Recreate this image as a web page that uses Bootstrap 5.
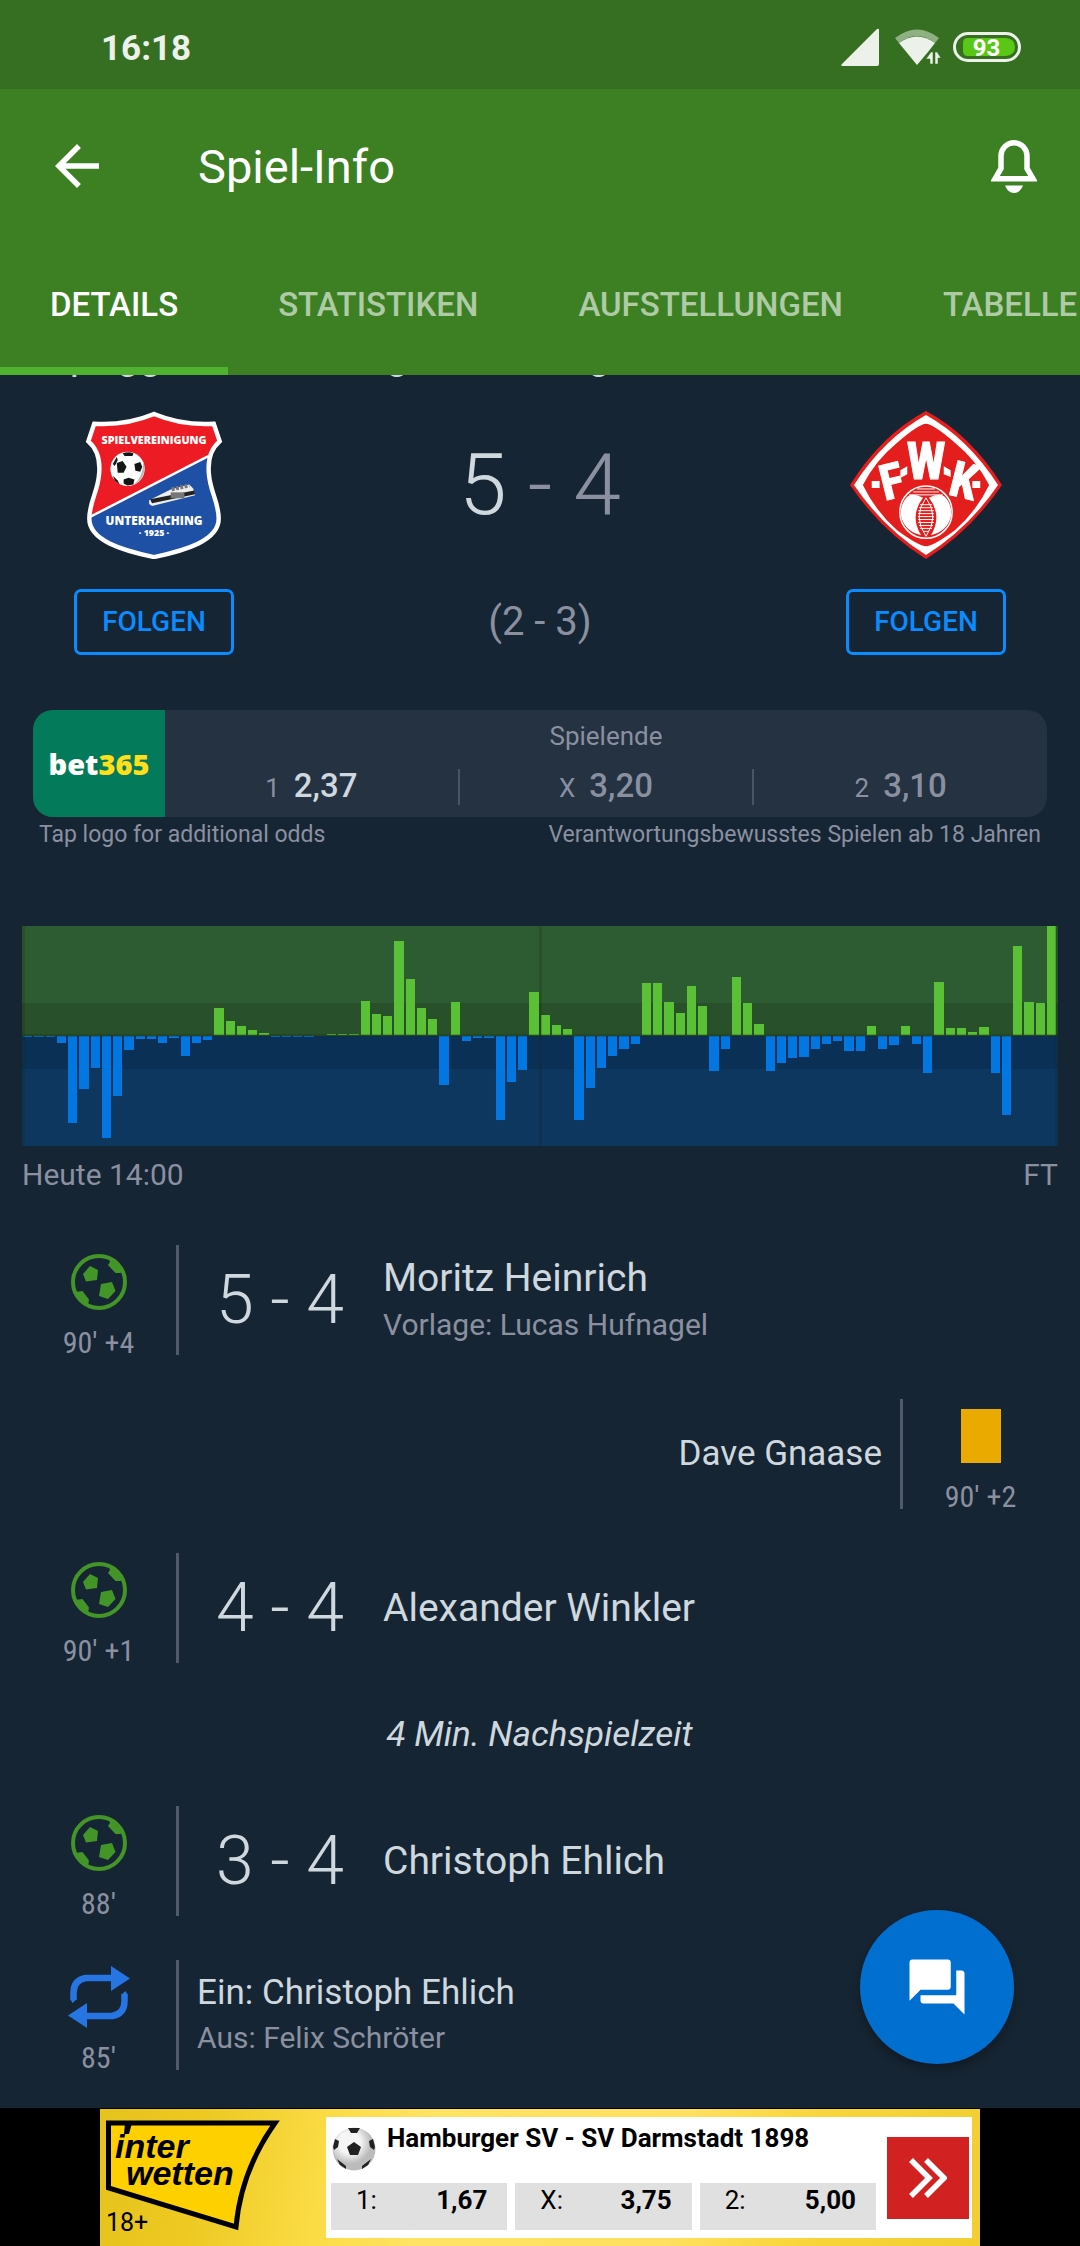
<!DOCTYPE html>
<html lang="de">
<head>
<meta charset="utf-8">
<meta name="viewport" content="width=device-width, initial-scale=1">
<title>Spiel-Info</title>
<link href="https://cdn.jsdelivr.net/npm/bootstrap@5.3.0/dist/css/bootstrap.min.css" rel="stylesheet">
<style>
body{background:#162533;color:#ced8de;font-family:Roboto,"Noto Sans",sans-serif;font-size:30px;line-height:36px}
svg{display:block;flex:none}
.dim{color:#8a90a0}
.status-bar{background:#366f21;height:89px;padding:4px 59px 0 101px;color:#ecf1ea}
.clock{font-size:35px;font-weight:700}
.app-head{background:#3c8023;color:#fff}
.title-row{height:154px;padding:0 43px 0 44px}
.title-row h1{font-size:47px;line-height:56px;font-weight:400;margin:0 auto 0 88px;padding-top:2px}
.icon-btn{background:none;border:0;padding:0;color:inherit}
.tab-strip{height:132px;overflow:hidden}
.tab-strip .nav-link{padding:0 50px;height:132px;line-height:124px;font-size:33px;font-weight:500;color:rgba(255,255,255,.6);border-bottom:8px solid transparent;white-space:nowrap}
.tab-strip .nav-link.active{color:#fff;border-color:#50b02f}
.fixture{height:36px;overflow:hidden;padding-left:46px;font-size:40px;white-space:nowrap}
.fixture span{display:block;line-height:44px;margin-top:-41px}
.team{width:308px;gap:30px}
.crest{height:148px}
.follow{width:160px;height:66px;border:3px solid #0a8cff;border-radius:7px;background:none;color:#0a8cff;font-size:28px;line-height:32px;font-weight:500;padding:0}
.score-mid{gap:30px}
.score-big{font-size:86px;line-height:148px;font-weight:300;color:#8a90a0}
.score-big b{font-weight:300;color:#ced8de}
.score-half{font-size:40px;line-height:66px;color:#8a90a0}
.odds-wrap{margin:55px 33px 0}
.odds-box{height:107px;border-radius:20px;background:#243241;overflow:hidden}
.bookie{width:132px;background:#037b5b;color:#fff;font:800 29px/36px "Open Sans","Noto Sans",sans-serif;text-decoration:none}
.bookie span{color:#ffdf1b}
.odds-head{font-size:26px;line-height:32px;padding-top:10px}
.odds-line{padding-top:17px}
.odd{flex:1 1 0;gap:14px;font-size:26px;line-height:34px}
.odd + .odd{border-left:2px solid #4a5564}
.odd strong{font-size:33px;font-weight:500}
.odd:first-child strong{color:#ced8de}
.note{font-size:23px;line-height:28px;padding:4px 6px 0}
.momentum{margin:77px 22px 0}
.plot{height:220px;padding-left:1px;position:relative;
 background:linear-gradient(#2d5c32 77px,#28502b 77px 110px,#0b3055 110px 143px,#0d375f 143px)}
.plot .bar-col{flex:1 1 0;height:220px;margin-right:2px}
.bar-col i{display:block}
.bar-col .home{background:#5ac137}
.bar-col .away{background:#0277e1;margin-top:110px}
.plot-line{position:absolute;background:rgba(20,40,20,.22)}
.plot-ends{padding-top:11px}
.events{margin:30px 22px 0 21px;padding-bottom:16px}
.event{padding:22px 0;font-size:35px;line-height:42px}
.when{width:155px;height:110px;color:#8a90a0;font-family:"Roboto Condensed",Roboto,sans-serif;font-size:30px;line-height:24px}
.when .pic{height:74px}
.rule{width:3px;height:110px;background:#505a69}
.goal-score{width:202px;font-size:68px;line-height:80px;font-weight:300}
.scorer{font-size:39px;line-height:46px;padding-left:2px}
.booked{margin-right:18px}
.under{font-size:30px;line-height:40px;margin-top:4px;padding-left:2px}
.swap{padding-left:18px}
.swap .under{padding-left:0}
.added{height:99px;font-size:35px;font-style:italic}
.fab{position:absolute;right:66px;bottom:44px;width:154px;height:154px;border:0;border-radius:50%;background:#006fd0;color:#fff;box-shadow:0 5px 10px rgba(0,0,0,.3)}
.ad-bar{background:#000;padding-top:1px}
.ad{width:880px;height:137px;margin:0 auto;padding:8px;color:#000;text-decoration:none;position:relative;
 background:linear-gradient(100deg,#e6c21c 0,#edc922 12%,#fbdc45 26%,#ffe365 38%,#ffe060 65%,#f8d53a 80%,#f2cf2f)}
.ad-brand{width:218px}
.ad-brand svg{margin-left:-5px}
.age{position:absolute;left:6px;bottom:8px;font-size:25px;line-height:30px}
.ad-panel{background:#fff;padding:8px 3px 8px 5px}
.ad-title{font-size:26px;line-height:26px;font-weight:700}
.ad-odds{gap:8px}
.ad-odds div{flex:1 1 0;height:47px;background:#e0e0e0;padding:2px 20px 0 25px;font-size:26px;line-height:30px}
.go{width:82px;height:82px;background:#d22121;margin-left:11px}
</style>
</head>
<body>
<svg width="0" height="0" class="position-absolute" aria-hidden="true">
 <symbol id="goal" viewBox="0 0 56 56"><circle cx="28" cy="28" r="26" fill="none" stroke="#449528" stroke-width="4"/><g fill="#449528"><path d="M12 20 19 12 27 16 26 26 15 27.500z"/><path d="M30 30 41 28 44.500 37 37 45 28 42z"/><path d="M38 4 53 18 49 19 44.500 19 37 11 39 8z"/><path d="M4 38 11.500 37 18 45.500 17 52z"/></g></symbol>
</svg>
<div class="d-flex flex-column min-vh-100">
<div class="status-bar d-flex align-items-center">
 <span class="clock me-auto pt-1">16:18</span>
 <svg class="me-3" width="38" height="38" viewBox="0 0 38 38"><path d="M36 1Q38 0 38 2V36Q38 38 36 38H2Q-1 38 1 36z" fill="#ecf1ea"/></svg>
 <svg width="58" height="36" viewBox="0 0 58 36"><path d="M0 9Q22-8 44 9L40 14Q22 0 4 14z" fill="#8eb083"/><path d="M4 14Q22 1 40 14L33 23 22 36z" fill="#ecf1ea"/><path d="M38 23V35H35V30H31L36 23zM40 23H42L46 29H43V35H40z" fill="#ecf1ea" stroke="#366f21" stroke-width=".5"/></svg>
 <svg width="68" height="30" viewBox="0 0 68 30"><rect x="1.500" y="1.500" width="65" height="27" rx="13.500" fill="none" stroke="#ecf1ea" stroke-width="3"/><path d="M15 6H53Q62 7 62 15T53 24H15Q10 24 10 19V11Q10 6 15 6z" fill="#58c716"/><text x="33.500" y="23.500" text-anchor="middle" font-family="Roboto,sans-serif" font-weight="700" font-size="24" fill="#fff">93</text></svg>
</div>
<header class="app-head">
 <div class="title-row d-flex align-items-center">
  <button class="icon-btn" aria-label="Zurück"><svg width="66" height="66" viewBox="0 0 24 24" fill="currentColor"><path d="M20 11H7.830l5.590-5.590L12 4l-8 8 8 8 1.410-1.410L7.830 13H20v-2z"/></svg></button>
  <h1>Spiel-Info</h1>
  <button class="icon-btn" aria-label="Benachrichtigungen"><svg width="46" height="53" viewBox="0 0 46 53"><path d="M4 38.800 10 28.500V16a13 13.200 0 0 1 26 0V28.500L42 38.800z" fill="none" stroke="currentColor" stroke-width="5.500"/><path d="M14 45.500H32Q29 53 23 53T14 45.500z" fill="currentColor"/></svg></button>
 </div>
 <nav class="nav flex-nowrap tab-strip" aria-label="Bereiche">
  <a class="nav-link active" href="#">DETAILS</a><a class="nav-link" href="#">STATISTIKEN</a><a class="nav-link" href="#">AUFSTELLUNGEN</a><a class="nav-link" href="#">TABELLE</a>
 </nav>
</header>
<main class="position-relative flex-grow-1">
 <div class="fixture"><span>SpVgg Unterhaching - Würzburger Kickers</span></div>
 <section class="d-flex">
  <div class="team d-flex flex-column align-items-center">
   <svg class="crest" width="142" height="151" viewBox="0 0 142 151" role="img" aria-label="Unterhaching">
    <defs><path id="shield" d="M71 3Q100 15 132 13L138 31Q125 42 127 64C128 82 137 92 137 110C137 132 104 142 71 149C38 142 5 132 5 110C5 92 14 82 15 64Q17 42 4 31L10 13Q42 15 71 3z"/><clipPath id="shieldClip"><use href="#shield"/></clipPath></defs>
    <use href="#shield" fill="#ed1c24"/>
    <g clip-path="url(#shieldClip)"><path d="M0 111 142 38V151H0z" fill="#1e50a6" stroke="#fff" stroke-width="2.500"/></g>
    <use href="#shield" fill="none" stroke="#fff" stroke-width="4.500"/>
    <circle cx="44" cy="59" r="17.500" fill="#fff"/><path d="M50 75A17.500 17.500 0 0 0 60 52Q60 68 50 75z" fill="#bbb"/>
    <g fill="#151515"><path d="M33 53 39 51 43 57 40 63 34 63z"/><path d="M51 54 57 52 59 57 57 62 52 61z"/><path d="M40 70 45 68 51 70 50 75 44 76 40 74z"/><path d="M39 43Q45 41 50 43L49 46H41z"/><path d="M29 54 33 47 34 50 31 56zM29 66 34 71 36 75 31 71z"/></g>
    <path d="M66 91 88 80 107 75 111 79 113 86 69 97 66 95z" fill="#eee"/><path d="M67 90 112 81 113 85 69 94z" fill="#222"/><path d="M89 80 107 76" stroke="#777" stroke-width="4" stroke-dasharray="3 1.500"/><rect x="88" y="83" width="14" height="6" fill="#777"/>
    <g fill="#fff" text-anchor="middle" font-family="'Open Sans',sans-serif" font-weight="800"><text x="71" y="34" font-size="11">SPIELVEREINIGUNG</text><text x="71" y="116" font-size="12">UNTERHACHING</text><text x="71" y="128" font-size="9">· 1925 ·</text></g>
   </svg>
   <button class="follow">FOLGEN</button>
  </div>
  <div class="score-mid flex-grow-1 d-flex flex-column text-center">
   <div class="score-big"><b>5</b> - 4</div>
   <div class="score-half">(2 - 3)</div>
  </div>
  <div class="team d-flex flex-column align-items-center">
   <svg class="crest" width="154" height="150" viewBox="0 0 154 150" role="img" aria-label="Würzburger Kickers">
    <path d="M77 0Q122 24 154 75 122 122 77 150 32 122 0 75 32 24 77 0z" fill="#e31e1c"/>
    <path d="M77 4Q120 28 150 75 120 119 77 146 34 119 4 75 34 28 77 4z" fill="#fff"/>
    <path d="M77 13Q84 13 106 32 128 50 141 75 128 102 106 121 84 137 77 137 70 137 48 121 26 102 13 75 26 50 48 32 70 13 77 13z" fill="#e31e1c"/>
    <g fill="#fff" stroke="#fff" stroke-width="1" font-family="'Roboto Condensed',Roboto,sans-serif" font-weight="700"><text x="77" y="69" text-anchor="middle" font-size="53">W</text><text transform="translate(35 91) rotate(-14)" font-size="50">F</text><text transform="translate(98 84) rotate(14)" font-size="50">K</text></g>
    <path d="M22 71H30V78H22zM124 71H132V78H124zM51 60 58 56V64L51 68zM95 56 102 60V67L95 64z" fill="#fff"/>
    <circle cx="77" cy="102.500" r="26.500" fill="#e31e1c" stroke="#fff" stroke-width="1.500"/>
    <path d="M74 88Q62 82 57 88 50 96 52 108 56 122 72 126 60 106 74 88zM80 88Q92 82 97 88 104 96 102 108 98 122 82 126 94 106 80 88z" fill="#fff"/>
    <path d="M77 88Q63 107 77 127 91 107 77 88z" fill="#e31e1c" stroke="#fff"/>
    <path d="M71 95H83M70 98H84M69 101H85M69 104H85M69 107H85M69 110H85M69 113H85M70 116H84M71 119H83M74 122H80M64 82H90M68 79H86M60 85H94" stroke="#fff" stroke-width="1"/>
   </svg>
   <button class="follow">FOLGEN</button>
  </div>
 </section>

 <section class="odds-wrap">
  <div class="odds-box d-flex">
   <a class="bookie d-flex align-items-center justify-content-center" href="#">bet<span>365</span></a>
   <div class="flex-grow-1 dim">
    <div class="odds-head text-center">Spielende</div>
    <div class="odds-line d-flex">
     <div class="odd d-flex justify-content-center align-items-baseline"><span>1</span><strong>2,37</strong></div>
     <div class="odd d-flex justify-content-center align-items-baseline"><span>X</span><strong>3,20</strong></div>
     <div class="odd d-flex justify-content-center align-items-baseline"><span>2</span><strong>3,10</strong></div>
    </div>
   </div>
  </div>
  <div class="note dim d-flex justify-content-between"><span>Tap logo for additional odds</span><span>Verantwortungsbewusstes Spielen ab 18 Jahren</span></div>
 </section>

 <section class="momentum">
  <div class="plot d-flex" id="plot"></div>
  <div class="plot-ends dim d-flex justify-content-between"><span>Heute 14:00</span><span>FT</span></div>
 </section>

 <section class="events">
  <div class="event d-flex align-items-center">
   <div class="when d-flex flex-column align-items-center justify-content-between"><div class="pic d-flex align-items-center"><svg width="56" height="56"><use href="#goal"/></svg></div><span>90' +4</span></div>
   <div class="rule"></div><div class="goal-score text-center">5 - 4</div>
   <div><div class="scorer">Moritz Heinrich</div><div class="under dim">Vorlage: Lucas Hufnagel</div></div>
  </div>
  <div class="event d-flex align-items-center justify-content-end">
   <div class="booked">Dave Gnaase</div><div class="rule"></div>
   <div class="when d-flex flex-column align-items-center justify-content-between"><div class="pic d-flex align-items-center"><svg width="40" height="54"><rect width="40" height="54" fill="#eaaa00"/></svg></div><span>90' +2</span></div>
  </div>
  <div class="event d-flex align-items-center">
   <div class="when d-flex flex-column align-items-center justify-content-between"><div class="pic d-flex align-items-center"><svg width="56" height="56"><use href="#goal"/></svg></div><span>90' +1</span></div>
   <div class="rule"></div><div class="goal-score text-center">4 - 4</div><div class="scorer">Alexander Winkler</div>
  </div>
  <div class="added d-flex align-items-center justify-content-center">4 Min. Nachspielzeit</div>
  <div class="event d-flex align-items-center">
   <div class="when d-flex flex-column align-items-center justify-content-between"><div class="pic d-flex align-items-center"><svg width="56" height="56"><use href="#goal"/></svg></div><span>88'</span></div>
   <div class="rule"></div><div class="goal-score text-center">3 - 4</div><div class="scorer">Christoph Ehlich</div>
  </div>
  <div class="event d-flex align-items-center">
   <div class="when d-flex flex-column align-items-center justify-content-between"><div class="pic d-flex align-items-center"><svg width="62" height="62" viewBox="0 0 62 62"><defs><g id="half"><path d="M44 12H18Q5.500 14 5.500 27V34" fill="none" stroke="#2675e3" stroke-width="6.500"/><path d="M43 0 62 12.500 43 25zM2.200 33H9L4.500 37z" fill="#2675e3"/></g></defs><use href="#half"/><use href="#half" transform="rotate(180 31 31)"/></svg></div><span>85'</span></div>
   <div class="rule"></div>
   <div class="swap"><div>Ein: Christoph Ehlich</div><div class="under dim">Aus: Felix Schröter</div></div>
  </div>
 </section>
 <button class="fab d-flex align-items-center justify-content-center" aria-label="Chat"><svg width="66" height="66" viewBox="0 0 24 24" fill="currentColor"><path d="M21 6h-2v9H6v2c0 .550.450 1 1 1h11l4 4V7c0-.550-.450-1-1-1zm-4 6V3c0-.550-.450-1-1-1H3c-.550 0-1 .450-1 1v14l4-4h10c.550 0 1-.450 1-1z"/></svg></button>
</main>
<footer class="ad-bar">
 <a class="ad d-flex" href="#">
  <div class="ad-brand"><svg width="184" height="118" viewBox="0 0 184 118"><path d="M5.500 6H172Q138 54 133 110L5.500 71z" fill="#ffd000" stroke="#000" stroke-width="5"/><path d="M22 6H29L26 17H21z"/><g font-family="'Liberation Sans',Arial,sans-serif" font-weight="700" font-style="italic" font-size="34"><text x="12" y="41">inter</text><text x="23" y="68">wetten</text></g></svg></div>
  <span class="age">18+</span>
  <div class="ad-panel flex-grow-1 d-flex align-items-center justify-content-between h-100">
   <div class="d-flex flex-column justify-content-between h-100 flex-grow-1">
    <div class="d-flex align-items-start" style="gap:10px">
     <svg width="46" height="46" viewBox="0 0 46 46"><defs><radialGradient id="ballShade" cx=".4" cy=".35"><stop offset=".5" stop-color="#f6f6f6"/><stop offset="1" stop-color="#bbb"/></radialGradient></defs><circle cx="23" cy="24" r="21.500" fill="url(#ballShade)"/><g fill="#222"><path d="M23 17 30 22 27 30H19L16 22z"/><path d="M17 3H29L26 8H20z"/><path d="M2 22 4 14 8 16 7 22 3 25zM44 22 42 14 38 16 39 22 43 25zM6 34 15 41 15 44 9 40zM40 34 31 41 31 44 37 40z"/></g></svg>
     <span class="ad-title">Hamburger SV - SV Darmstadt 1898</span>
    </div>
    <div class="ad-odds d-flex">
     <div class="d-flex justify-content-between"><span>1:</span><strong>1,67</strong></div>
     <div class="d-flex justify-content-between"><span>X:</span><strong>3,75</strong></div>
     <div class="d-flex justify-content-between"><span>2:</span><strong>5,00</strong></div>
    </div>
   </div>
   <div class="go d-flex align-items-center justify-content-center"><svg width="38" height="40" viewBox="0 0 38 40"><path d="M2 2 20 20 2 38M17 2 35 20 17 38" fill="none" stroke="#fff" stroke-width="5.500"/></svg></div>
  </div>
 </a>
</footer>
</div>
<script src="https://cdn.jsdelivr.net/npm/bootstrap@5.3.0/dist/js/bootstrap.bundle.min.js"></script>
<script>
// Attack momentum per minute: positive = home side, negative = away side
const momentum = [-1,-1,-1,-7,-87,-53,-32,-102,-60,-14,-3,-3,-7,-2,-20,-7,-4,27,14,9,5,2,-1,-1,-1,-1,0,1,1,1,34,21,19,94,56,27,16,-49,33,-5,-2,-2,-84,-46,-34,43,
20,10,6,-84,-52,-32,-20,-13,-8,52,52,33,22,49,29,-35,-13,58,32,11,-35,-27,-22,-21,-13,-8,-5,-15,-15,9,-13,-9,9,-8,-37,53,7,7,3,8,-37,-79,89,33,32,109];
document.getElementById('plot').innerHTML = momentum.map(v => {
  const h = Math.abs(v);
  return '<div class="bar-col">' + (v > 0
    ? `<i class="home" style="height:${h}px;margin-top:${109 - h}px"></i>`
    : `<i class="away" style="height:${h}px"></i>`) + '</div>';
}).join('') +
'<span class="plot-line start-0 top-0 h-100" style="width:3px"></span>' +
'<span class="plot-line start-50 top-0 h-100" style="width:3px;margin-left:-1px"></span>' +
'<span class="plot-line end-0 top-0 h-100" style="width:3px"></span>' +
'<span class="plot-line start-0 w-100" style="height:3px;top:108px"></span>';
</script>
</body>
</html>
